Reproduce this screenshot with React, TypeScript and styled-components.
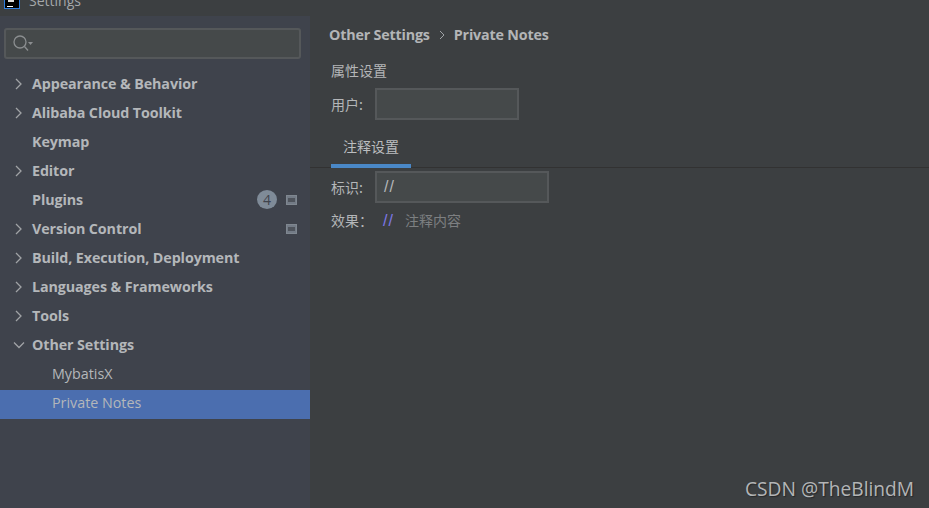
import React from "react";
import styled, { createGlobalStyle } from "styled-components";

const Global = createGlobalStyle`
  html, body { margin: 0; padding: 0; background: #3c3f41; }
  body { font-family: "Open Sans", "Noto Sans CJK SC", sans-serif; }
`;
const CJK = `"Noto Sans CJK SC", "Open Sans", sans-serif`;

const Page = styled.div`
  position: relative; width: 929px; height: 508px; overflow: hidden;
  display: flex; flex-direction: column; background: #3c3f41;
`;
const TitleBar = styled.div`
  height: 16px; flex: none; background: #3c3f41; display: flex; align-items: flex-start; overflow: hidden;
`;
const AppIcon = styled.div`
  width: 16px; height: 9px; margin-left: 4px; background: #000; border: 1px solid #2f7fe0; border-top: 0;
  box-sizing: border-box; position: relative; flex: none;
  &::after { content: ""; position: absolute; left: 2px; bottom: 1px; width: 6px; height: 1px; background: #fff; }
  &::before { content: ""; position: absolute; left: 3px; top: 0; width: 6px; height: 2px; background: #ddd; }
`;
const TitleText = styled.div`
  margin-left: 9px; margin-top: -9px; font-size: 14px; line-height: 19px; color: #a5a8aa;
`;
const Body = styled.div`flex: 1; display: flex; min-height: 0;`;
const Sidebar = styled.aside`
  width: 310px; flex: none; background: #3f434c; display: flex; flex-direction: column; padding-top: 12px; box-sizing: border-box;
`;
const SearchBox = styled.div`
  margin: 0 9px 12px 4px; height: 31px; box-sizing: border-box; border: 2px solid #55585a; border-radius: 3px;
  background: #45494a; display: flex; align-items: center; padding-left: 6px;
`;
const Tree = styled.div`display: flex; flex-direction: column;`;
const Row = styled.div<{ $selected?: boolean; $child?: boolean }>`
  height: 29px; box-sizing: border-box; display: flex; align-items: center; position: relative; flex: none;
  padding: 0 0 4px ${p => (p.$child ? 52 : 13)}px;
  background: ${p => (p.$selected ? "#4b6eaf" : "transparent")};
`;
const Arrow = styled.span`width: 19px; height: 12px; display: flex; flex: none; align-items: center;`;
const Label = styled.span<{ $child?: boolean }>`
  font-size: 14.3px; font-weight: ${p => (p.$child ? 400 : 700)}; letter-spacing: ${p => (p.$child ? "0" : "-0.1px")};
  color: #b4b7ba; white-space: nowrap;
`;
const Badge = styled.span`
  position: absolute; left: 257px; top: 3px; width: 20px; height: 19px; border-radius: 50%; background: #7f8b98;
  color: #3f434c; font-size: 14px; display: flex; align-items: center; justify-content: center;
`;
const Square = styled.span`
  position: absolute; left: 286px; top: 8px; width: 11px; height: 10px; box-sizing: border-box;
  border: 1px solid #7f8790; background: #737b86;
  &::after { content: ""; position: absolute; left: 1px; right: 1px; top: 2px; height: 4px; background: #4f545c; }
`;
const Main = styled.main`
  flex: 1; display: flex; flex-direction: column; background: #3c3f41; padding-top: 6px;
`;
const Crumbs = styled.div`
  margin-left: 19px; display: flex; align-items: center; height: 25px; color: #b3b5b7;
  font-size: 14.3px; font-weight: 700; letter-spacing: -0.18px; white-space: nowrap;
`;
const CrumbSep = styled.span`width: 24px; display: flex; justify-content: center;`;
const SectionTitle = styled.div`
  margin: 12px 0 0 21px; height: 22px; font: 400 14px/22px ${CJK}; color: #b4b6b8;
`;
const FormRow = styled.div<{ $gap?: number }>`
  display: flex; align-items: center; margin-left: 21px; margin-top: ${p => p.$gap ?? 0}px;
`;
const FieldLabel = styled.span`
  width: 44px; flex: none; font: 400 14px/20px ${CJK}; color: #b4b6b8;
`;
const Input = styled.div<{ $w: number }>`
  width: ${p => p.$w}px; height: 32px; box-sizing: border-box; border: 2px solid #55585a; background: #45494a;
  color: #b4b7ba; font-size: 16px; line-height: 28px; padding-left: 7px; letter-spacing: 1px; font-family: "Liberation Sans", sans-serif;
`;
const Tabs = styled.div`
  margin-top: 10px; height: 38px; box-sizing: border-box; border-bottom: 1px solid #323232; padding-left: 21px; display: flex;
`;
const Tab = styled.div`
  width: 80px; height: 38px; box-sizing: border-box; border-bottom: 4px solid #4a88c7; padding-left: 12px;
  font: 400 14px/32px ${CJK}; color: #bbbdbf;
`;
const Effect = styled.div`
  display: flex; align-items: center; margin: 6px 0 0 21px; height: 22px;
`;
const EffectLabel = styled.span`width: 52px; flex: none; font: 400 14px/20px ${CJK}; color: #b4b6b8;`;
const Slashes = styled.span`
  width: 22px; margin-top: 2px; font: 400 16px/20px "Liberation Sans", sans-serif; letter-spacing: 1px; color: #7e78e6; flex: none;
`;
const Comment = styled.span`font: 400 14px/20px ${CJK}; color: #7d7f81;`;
const Watermark = styled.div`
  position: absolute; left: 745px; top: 475px; font: 400 19.2px/28px "Open Sans", sans-serif; color: #b3b5b6; white-space: nowrap;
  text-shadow: 1px 1px 1px #26282a;
`;

const Chevron = ({ open }: { open?: boolean }) => (
  <svg width="12" height="12" viewBox="0 0 12 12" fill="none" stroke="#a0a3a6" strokeWidth="1.3">
    {open ? <path d="M1 3.5 6 8.5 11 3.5" /> : <path d="M3 1 8 6 3 11" />}
  </svg>
);

const items: { t: string; arrow?: boolean; badge?: boolean; sq?: boolean }[] = [
  { t: "Appearance & Behavior", arrow: true },
  { t: "Alibaba Cloud Toolkit", arrow: true },
  { t: "Keymap" },
  { t: "Editor", arrow: true },
  { t: "Plugins", badge: true, sq: true },
  { t: "Version Control", arrow: true, sq: true },
  { t: "Build, Execution, Deployment", arrow: true },
  { t: "Languages & Frameworks", arrow: true },
  { t: "Tools", arrow: true },
];

export default function App() {
  return (
    <Page>
      <Global />
      <TitleBar>
        <AppIcon />
        <TitleText>Settings</TitleText>
      </TitleBar>
      <Body>
        <Sidebar>
          <SearchBox>
            <svg width="22" height="20" viewBox="0 0 22 20" fill="none" stroke="#8b8e90" strokeWidth="1.3">
              <circle cx="8" cy="8" r="6" />
              <path d="M12.500 12.500 16 16.500" />
              <path d="M16 8h5l-2.500 3z" fill="#8b8e90" stroke="none" />
            </svg>
          </SearchBox>
          <Tree>
            {items.map(i => (
              <Row key={i.t}>
                <Arrow>{i.arrow && <Chevron />}</Arrow>
                <Label>{i.t}</Label>
                {i.badge && <Badge>4</Badge>}
                {i.sq && <Square />}
              </Row>
            ))}
            <Row>
              <Arrow><Chevron open /></Arrow>
              <Label>Other Settings</Label>
            </Row>
            <Row $child><Label $child>MybatisX</Label></Row>
            <Row $child $selected><Label $child>Private Notes</Label></Row>
          </Tree>
        </Sidebar>
        <Main>
          <Crumbs>
            Other Settings
            <CrumbSep>
              <svg width="6" height="10" viewBox="0 0 6 10" fill="none" stroke="#a0a3a6" strokeWidth="1"><path d="M1 1l4 4-4 4" /></svg>
            </CrumbSep>
            Private Notes
          </Crumbs>
          <SectionTitle>属性设置</SectionTitle>
          <FormRow $gap={7}>
            <FieldLabel>用户:</FieldLabel>
            <Input $w={144} />
          </FormRow>
          <Tabs><Tab>注释设置</Tab></Tabs>
          <FormRow $gap={3}>
            <FieldLabel>标识:</FieldLabel>
            <Input $w={174}>//</Input>
          </FormRow>
          <Effect>
            <EffectLabel>效果：</EffectLabel>
            <Slashes>//</Slashes>
            <Comment>注释内容</Comment>
          </Effect>
        </Main>
      </Body>
      <Watermark>CSDN @TheBlindM</Watermark>
    </Page>
  );
}
